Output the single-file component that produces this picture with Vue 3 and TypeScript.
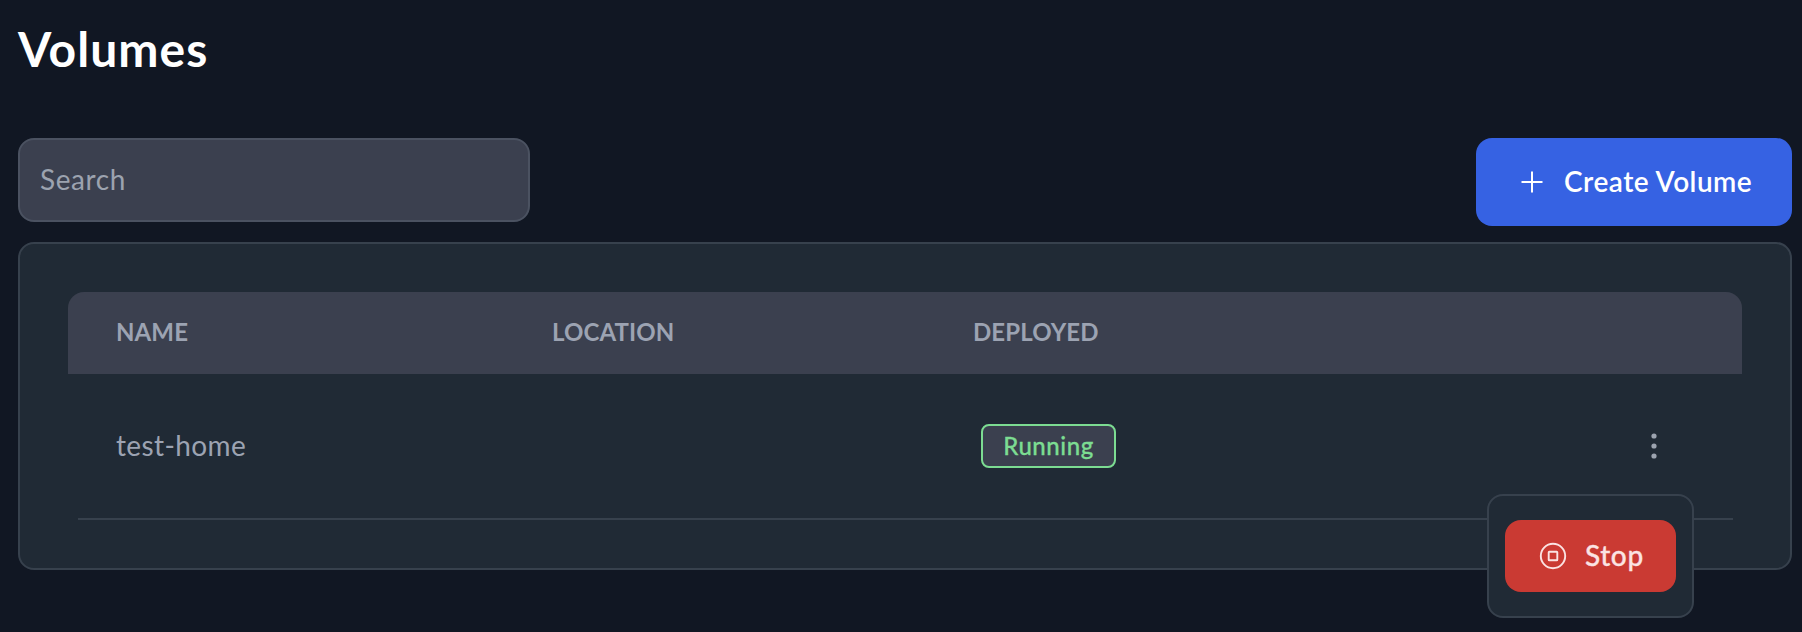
<script setup lang="ts">
import { ref } from 'vue'

interface Volume {
  name: string
  location: string
  status: string
}

const search = ref('')
const columns = ['Name', 'Location', 'Deployed', '']
const volumes: Volume[] = [{ name: 'test-home', location: '', status: 'Running' }]
</script>

<template>
  <main class="page">
    <h1 class="title"><span>Volumes</span></h1>
    <div class="toolbar">
      <input v-model="search" class="search" type="text" placeholder="Search" />
      <button class="create" type="button">
        <svg class="plus" viewBox="0 0 22 22" aria-hidden="true">
          <path d="M11 .5v21M.5 11h21" />
        </svg>
        <span>Create Volume</span>
      </button>
    </div>
    <section class="panel">
      <div class="row head">
        <div v-for="column in columns" :key="column" class="cell"><span>{{ column }}</span></div>
      </div>
      <div v-for="volume in volumes" :key="volume.name" class="row body">
        <div class="cell name"><span>{{ volume.name }}</span></div>
        <div class="cell">{{ volume.location }}</div>
        <div class="cell"><span class="badge"><span>{{ volume.status }}</span></span></div>
        <div class="cell actions">
          <svg class="dots" viewBox="0 0 6 26" aria-hidden="true">
            <circle cx="3" cy="3" r="2.6" />
            <circle cx="3" cy="13" r="2.6" />
            <circle cx="3" cy="23" r="2.6" />
          </svg>
          <div class="menu">
            <button class="stop" type="button">
              <svg class="stop-icon" viewBox="0 0 28 28" aria-hidden="true">
                <circle cx="14" cy="14" r="12.2" />
                <rect x="9.7" y="9.7" width="8.6" height="8.6" rx=".6" />
              </svg>
              <span>Stop</span>
            </button>
          </div>
        </div>
      </div>
    </section>
  </main>
</template>

<style>
body {
  margin: 0;
  background: #111723;
}
</style>

<style scoped>
* {
  box-sizing: border-box;
}
.page {
  height: 632px;
  overflow: hidden;
  padding: 18px 10px 0 18px;
  background: #111723;
  color: #9ca3b2;
  font-family: Lato, "Open Sans", sans-serif;
  font-size: 28px;
}
.title {
  height: 64px;
  margin: 0 0 56px;
  color: #fff;
  font-size: 48px;
  font-weight: 700;
  line-height: 62px;
  letter-spacing: 1.05px;
}
.toolbar {
  display: flex;
  justify-content: space-between;
  align-items: flex-start;
  height: 88px;
  margin-bottom: 16px;
}
button,
input {
  font: inherit;
}
.search {
  width: 512px;
  height: 84px;
  padding: 0 20px 2px;
  border: 2px solid #4b5261;
  border-radius: 16px;
  background: #3b404f;
  color: #d1d5db;
  letter-spacing: 0.6px;
}
.search::placeholder {
  color: #9ca3af;
  opacity: 1;
}
.create {
  display: flex;
  align-items: center;
  width: 316px;
  height: 88px;
  padding: 0 0 0 45px;
  border: 0;
  border-radius: 16px;
  background: #3662e3;
  color: #fff;
  font-weight: 600;
  letter-spacing: 0.5px;
}
.create span,
.stop span,
.badge span {
  padding-bottom: 2px;
}
.plus {
  width: 22px;
  height: 22px;
  margin-right: 21px;
  fill: none;
  stroke: currentColor;
  stroke-width: 2;
}
.panel {
  height: 328px;
  padding: 48px;
  border: 2px solid #37414d;
  border-radius: 16px;
  background: #202a35;
}
.row {
  display: grid;
  grid-template-columns: 436px 421px 421px 396px;
}
.cell {
  display: flex;
  align-items: center;
  padding-left: 48px;
}
.head {
  height: 82px;
  padding-bottom: 4px;
  border-radius: 16px 16px 0 0;
  background: #3b404f;
  font-size: 24px;
  font-weight: 700;
  letter-spacing: 0.1px;
  text-transform: uppercase;
}
.body {
  height: 146px;
  padding-bottom: 2px;
  background: linear-gradient(#37414d, #37414d) bottom center / calc(100% - 19px) 2px no-repeat;
}
.name {
  padding-bottom: 2px;
  letter-spacing: 0.4px;
}
.badge {
  display: flex;
  align-items: center;
  justify-content: center;
  width: 135px;
  height: 44px;
  margin-left: 8px;
  border: 2px solid #7cdc92;
  border-radius: 8px;
  background: #3b404f;
  color: #7cdc92;
  font-size: 24px;
  font-weight: 500;
  letter-spacing: 0.55px;
  -webkit-text-stroke: 0.3px currentColor;
}
.actions {
  position: relative;
  justify-content: flex-end;
  padding: 0 85px 0 0;
}
.dots {
  width: 6px;
  height: 26px;
  fill: #9ca3af;
}
.menu {
  position: absolute;
  top: 120px;
  right: 48px;
  width: 207px;
  height: 124px;
  padding: 24px 16px;
  border: 2px solid #37414d;
  border-radius: 16px;
  background: #202a35;
}
.stop {
  display: flex;
  align-items: center;
  width: 171px;
  height: 72px;
  padding: 0 0 0 34px;
  border: 0;
  border-radius: 16px;
  background: #ca3a33;
  color: #fbe3e3;
  font-weight: 500;
  letter-spacing: 0.6px;
  -webkit-text-stroke: 0.3px currentColor;
}
.stop-icon {
  width: 28px;
  height: 28px;
  margin-right: 18px;
  fill: none;
  stroke: currentColor;
  stroke-width: 1.9;
}
</style>
